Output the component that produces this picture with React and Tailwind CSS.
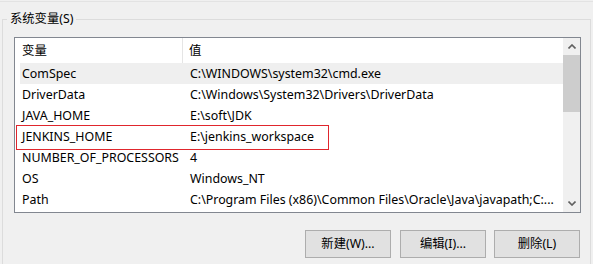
import React from "react";

const rows = [
  ["ComSpec", "C:\\WINDOWS\\system32\\cmd.exe"],
  ["DriverData", "C:\\Windows\\System32\\Drivers\\DriverData"],
  ["JAVA_HOME", "E:\\soft\\JDK"],
  ["JENKINS_HOME", "E:\\jenkins_workspace"],
  ["NUMBER_OF_PROCESSORS", "4"],
  ["OS", "Windows_NT"],
  ["Path", "C:\\Program Files (x86)\\Common Files\\Oracle\\Java\\javapath;C:..."],
];

function Btn({ children, className = "" }) {
  return (
    <button className={"w-[86px] h-[28px] border border-[#adadad] bg-[#e1e1e1] text-[12.3px] text-black flex items-center justify-center " + className}>
      {children}
    </button>
  );
}

export default function App() {
  return (
    <div
      className="w-[593px] h-[264px] overflow-hidden bg-[#f0f0f0] text-black"
      style={{ fontFamily: '"Noto Sans", "Noto Sans CJK SC", sans-serif' }}
    >
      <div className="h-[2px] border-b border-[#e3e3e3]" />
      <fieldset className="mt-[9px] mx-[2px] h-[300px] border border-[#dcdcdc] p-0 m-0">
        <legend className="ml-[4px] px-[3px] text-[12.3px] leading-[16px]">系统变量(S)</legend>
        <div className="ml-[11px] mt-[10px] w-[567px] h-[176px] border border-[#828790] bg-white flex text-[12.4px]">
          <div className="flex-1 flex flex-col">
            <div className="h-[25px] flex items-center shrink-0">
              <div className="w-[168px] h-full pl-[7px] pt-[2px] flex items-center border-r border-[#e5e5e5]">变量</div>
              <div className="pl-[6px] pt-[2px]">值</div>
            </div>
            {rows.map(([k, v], i) => (
              <div
                key={k}
                className={
                  "relative ml-[5px] h-[21px] pt-[1px] flex items-center shrink-0 " +
                  (i === 0 ? "bg-[#efefef]" : "")
                }
              >
                <div className="w-[170px] pl-[2px] whitespace-nowrap">{k}</div>
                <div className="whitespace-nowrap">{v}</div>
                {k === "JENKINS_HOME" && (
                  <div className="absolute left-[-4px] top-[-1px] w-[313px] h-[25px] border border-[#e0262d]" />
                )}
              </div>
            ))}
          </div>
          <div className="w-[17px] bg-[#f0f0f0] flex flex-col">
            <div className="h-[17px] flex items-center justify-center">
              <svg width="8" height="5" viewBox="0 0 8 5">
                <path d="M0.5 4.5 L4 1 L7.5 4.5" stroke="#606060" strokeWidth="1.6" fill="none" />
              </svg>
            </div>
            <div className="h-[57px] bg-[#cdcdcd]" />
            <div className="flex-1" />
            <div className="h-[17px] flex items-center justify-center">
              <svg width="8" height="5" viewBox="0 0 8 5">
                <path d="M0.5 0.5 L4 4 L7.5 0.5" stroke="#606060" strokeWidth="1.6" fill="none" />
              </svg>
            </div>
          </div>
        </div>
        <div className="ml-[11px] w-[567px] mt-[17px] flex justify-end pr-[1px]">
          <Btn>新建(W)...</Btn>
          <Btn className="ml-[9px]">编辑(I)...</Btn>
          <Btn className="ml-[8px]">删除(L)</Btn>
        </div>
      </fieldset>
    </div>
  );
}
